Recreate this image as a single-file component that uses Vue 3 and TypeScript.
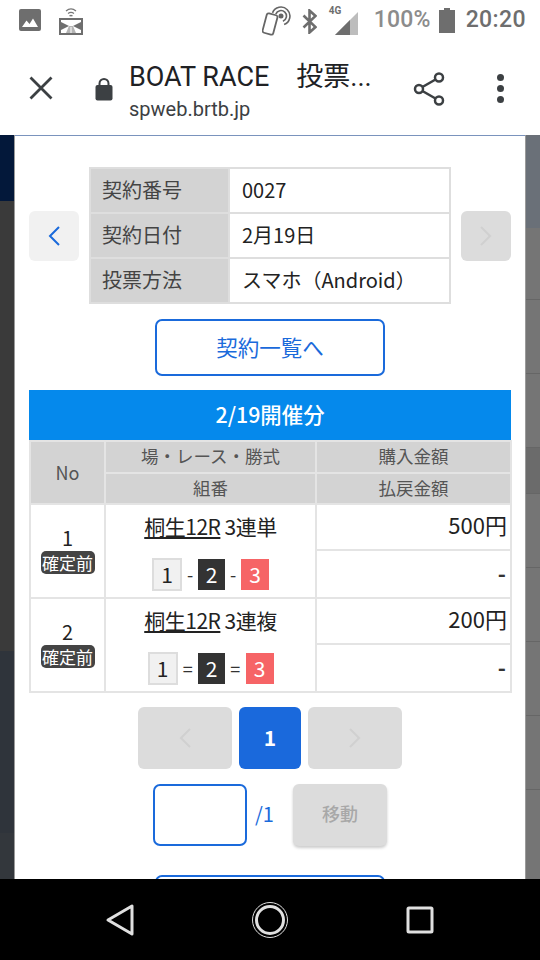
<script setup lang="ts">
interface Row {
  no: number
  race: string
  sep: string
  wide: boolean
  amount: string
}
const rows: Row[] = [
  { no: 1, race: '3連単', sep: '-', wide: false, amount: '500円' },
  { no: 2, race: '3連複', sep: '=', wide: true, amount: '200円' },
]
</script>

<template>
  <div class="screen">
    <div class="status">
      <div class="st-left">
        <svg class="ic-img" width="22" height="22" viewBox="0 0 22 22">
          <rect x="0" y="0" width="22" height="22" rx="2" fill="#6e6e6e" />
          <path d="M3 18l4.500-6.500 3 3.500 3.500-5.500 5 8.500z" fill="#fff" />
        </svg>
        <svg class="ic-cast" width="24" height="28" viewBox="0 0 24 28">
          <path d="M7 4c3-2.500 7-2.500 10 0M9 6.500c2-1.500 4-1.500 6 0M10.500 9c1-.7 2-.7 3 0" stroke="#777" stroke-width="1.300" fill="none" />
          <rect x="1" y="12" width="22" height="15" fill="#fff" stroke="#6e6e6e" stroke-width="2" />
          <path d="M2 15l8 4-8 4zM22 15l-8 4 8 4z" fill="#6e6e6e" />
          <path d="M10 19h4l3 7H7z" fill="#b5b5b5" />
          <path d="M12 20v6" stroke="#fff" stroke-width="1" />
        </svg>
      </div>
      <div class="st-right">
        <svg class="ic-nfc" width="30" height="31" viewBox="0 0 30 31">
          <rect x="2.500" y="8" rx="2" width="11" height="20" transform="rotate(15 8 18)" fill="#fff" stroke="#666" stroke-width="1.800" />
          <circle cx="19" cy="10" r="2.500" fill="#666" />
          <path d="M13.800 8.100A5.500 5.500 0 1 1 20.900 15.200M10.500 6.900A9 9 0 1 1 22.100 18.500" stroke="#666" stroke-width="1.600" fill="none" />
        </svg>
        <svg class="ic-bt" width="15" height="25" viewBox="0 0 15 25">
          <path d="M1.500 6.500l12 11.500-6 5.500V1.500l6 5.500L1.500 18.500" stroke="#6e6e6e" stroke-width="2.600" fill="none" />
        </svg>
        <div class="signal">
          <span class="g4">4G</span>
          <svg width="24" height="24" viewBox="0 0 24 24">
            <path d="M0 24L23 1v23z" fill="#bdbdbd" />
            <path d="M0 24l15-15v15z" fill="#6e6e6e" />
          </svg>
        </div>
        <span class="pct">100%</span>
        <svg class="ic-bat" width="16" height="25" viewBox="0 0 16 25">
          <path d="M5 0h6v2h5v23H0V2h5z" fill="#6e6e6e" />
        </svg>
        <span class="clock">20:20</span>
      </div>
    </div>

    <div class="toolbar">
      <svg class="ic-close" width="24" height="24" viewBox="0 0 24 24">
        <path d="M1.500 1.500l21 21M22.500 1.500l-21 21" stroke="#3c4043" stroke-width="2.800" fill="none" />
      </svg>
      <svg class="ic-lock" width="18" height="24" viewBox="0 0 18 24">
        <path d="M4.500 9V6.500a4.500 4.500 0 0 1 9 0V9" stroke="#3c4043" stroke-width="2" fill="none" />
        <rect x="0.500" y="8" width="17" height="15.500" rx="2" fill="#3c4043" />
      </svg>
      <div class="tb-text">
        <div class="tb-title">BOAT RACE　投票...</div>
        <div class="tb-url">spweb.brtb.jp</div>
      </div>
      <svg class="ic-share" width="32" height="36" viewBox="0 0 32 36">
        <path d="M26 6.500L6 18l20 11.500" stroke="#3c4043" stroke-width="2.500" fill="none" />
        <circle cx="26" cy="6.500" r="4" fill="#fff" stroke="#3c4043" stroke-width="2.500" />
        <circle cx="6" cy="18" r="4" fill="#fff" stroke="#3c4043" stroke-width="2.500" />
        <circle cx="26" cy="29.500" r="4" fill="#fff" stroke="#3c4043" stroke-width="2.500" />
      </svg>
      <div class="dots"><i></i><i></i><i></i></div>
    </div>

    <div class="stage">
      <div class="side side-l">
        <div class="b b1"></div><div class="b b2"></div><div class="b b3"></div><div class="b b4"></div>
      </div>
      <div class="modal">
        <div class="contract">
          <button class="nav-btn on">
            <svg width="14" height="22" viewBox="0 0 14 22"><path d="M12 2L3 11l9 9" stroke="#1a6adb" stroke-width="2" fill="none" /></svg>
          </button>
          <table class="info">
            <tbody>
              <tr><th>契約番号</th><td>0027</td></tr>
              <tr><th>契約日付</th><td>2月19日</td></tr>
              <tr><th>投票方法</th><td>スマホ（Android）</td></tr>
            </tbody>
          </table>
          <button class="nav-btn off">
            <svg width="14" height="22" viewBox="0 0 14 22"><path d="M2 2l9 9-9 9" stroke="#d0d0d0" stroke-width="2" fill="none" /></svg>
          </button>
        </div>
        <div class="list-wrap"><button class="outline">契約一覧へ</button></div>

        <div class="date-head">2/19開催分</div>
        <table class="bets">
          <colgroup><col class="c1" /><col class="c2" /><col class="c3" /></colgroup>
          <thead>
            <tr><th rowspan="2" class="no-h">No</th><th>場・レース・勝式</th><th>購入金額</th></tr>
            <tr><th>組番</th><th>払戻金額</th></tr>
          </thead>
          <tbody v-for="r in rows" :key="r.no">
            <tr class="up">
              <td rowspan="2" class="no-c">
                <div class="no-n">{{ r.no }}</div>
                <span class="tag">確定前</span>
              </td>
              <td rowspan="2" class="mid">
                <div class="race"><u>桐生12R</u> {{ r.race }}</div>
                <div class="combo" :class="{ wide: r.wide }">
                  <span class="n n1">1</span><span class="s">{{ r.sep }}</span><span class="n n2">2</span><span class="s">{{ r.sep }}</span><span class="n n3">3</span>
                </div>
              </td>
              <td class="amt">{{ r.amount }}</td>
            </tr>
            <tr class="lo"><td class="pay">-</td></tr>
          </tbody>
        </table>

        <div class="pager">
          <button class="pg wide-pg">
            <svg width="14" height="22" viewBox="0 0 14 22"><path d="M12 2L3 11l9 9" stroke="#d0d0d0" stroke-width="2" fill="none" /></svg>
          </button>
          <button class="pg cur">1</button>
          <button class="pg wide-pg">
            <svg width="14" height="22" viewBox="0 0 14 22"><path d="M2 2l9 9-9 9" stroke="#d0d0d0" stroke-width="2" fill="none" /></svg>
          </button>
        </div>
        <div class="jump">
          <div class="input"></div>
          <span class="total">/1</span>
          <button class="move">移動</button>
        </div>
        <div class="list-wrap next"><button class="outline"></button></div>
      </div>
      <div class="side side-r">
        <div class="r r0"></div><div class="r r1"></div><div class="r r2"></div><div class="r r3"></div><div class="r r4"></div><div class="r r5"></div><div class="r r6"></div><div class="r r7"></div><div class="r r8"></div><div class="r r9"></div>
      </div>
    </div>

    <div class="navbar">
      <svg width="30" height="34" viewBox="0 0 30 34">
        <path d="M27 3v28L3 17z" stroke="#e0e0e0" stroke-width="3" stroke-linejoin="round" fill="none" />
      </svg>
      <svg width="38" height="38" viewBox="0 0 38 38">
        <circle cx="19" cy="19" r="17.500" stroke="#e0e0e0" stroke-width="1" fill="none" />
        <circle cx="19" cy="19" r="13.500" stroke="#e0e0e0" stroke-width="3" fill="none" />
      </svg>
      <svg width="28" height="28" viewBox="0 0 28 28">
        <rect x="2" y="2" width="24" height="24" rx="1" stroke="#e0e0e0" stroke-width="3" fill="none" />
      </svg>
    </div>
  </div>
</template>

<style scoped>
.screen {
  width: 540px;
  height: 960px;
  display: flex;
  flex-direction: column;
  overflow: hidden;
  font-family: "Noto Sans CJK JP", "Noto Sans", sans-serif;
  background: #fff;
}
button { font-family: inherit; padding: 0; }
.status {
  height: 40px;
  flex: none;
  display: flex;
  justify-content: space-between;
  align-items: center;
  padding: 0 14px 0 19px;
}
.st-left { display: flex; align-items: center; gap: 18px; }
.ic-cast { margin-top: 1px; }
.st-right { display: flex; align-items: center; }
.ic-nfc { margin-right: 10px; margin-top: 2px; }
.ic-bt { margin-right: 12px; margin-top: 3px; }
.signal { position: relative; width: 30px; height: 26px; margin-right: 15px; display: flex; justify-content: flex-end; align-items: flex-end; margin-top: 3px; }
.g4 { position: absolute; left: 0; top: -4px; font: 700 10px/12px Roboto, sans-serif; color: #6e6e6e; }
.pct { font: 500 23px/26px Roboto, sans-serif; color: #8c8c8c; margin-right: 8px; letter-spacing: .2px; }
.ic-bat { margin-right: 11px; }
.clock { font: 500 23px/26px Roboto, sans-serif; color: #6e6e6e; letter-spacing: .4px; }

.toolbar {
  height: 95px;
  flex: none;
  display: flex;
  align-items: center;
  background: #fff;
}
.ic-close { margin-left: 29px; margin-top: 1px; flex: none; }
.ic-lock { margin-left: 42px; margin-top: 2px; flex: none; }
.tb-text { margin-left: 16px; width: 284px; margin-top: 11px; flex: none; }
.tb-title { font: 400 27px/32px Roboto, "Noto Sans CJK JP", sans-serif; color: #202124; white-space: pre; }
.tb-url { font: 400 20px/32px Roboto, sans-serif; color: #3c4043; }
.ic-share { margin-top: 2px; flex: none; }
.dots { margin-left: 52px; display: flex; flex-direction: column; gap: 4px; margin-top: 1px; }
.dots i { width: 7px; height: 7px; border-radius: 50%; background: #3c4043; display: block; }

.stage { flex: 1; display: flex; min-height: 0; background: #747474; }
.side { width: 15px; box-sizing: border-box; flex: none; display: flex; flex-direction: column; }
.side-l { border-right: 1px solid #9a9a9a; }
.side-l .b1 { height: 66px; background: #03183a; }
.side-l .b2 { height: 450px; background: #3a3a3a; }
.side-l .b3 { height: 182px; background: #2f343b; }
.side-l .b4 { flex: 1; background: #33373c; }
.side-r { border-left: 1px solid #9a9a9a; }
.side-r .r { box-sizing: border-box; background: #757575; border-bottom: 1px solid #666; height: 74px; }
.side-r .r0 { height: 93px; background: #6a7078; border-bottom: 0; }
.side-r .r1 { height: 72px; }
.side-r .r4 { height: 46px; background: #6b6b6b; }
.side-r .r9 { flex: 1; height: auto; border-bottom: 0; }
.modal {
  flex: 1;
  min-width: 0;
  background: #fff;
  border-top: 1px solid #7a93bd;
  padding: 31px 14px 0;
  overflow: hidden;
}
.contract { display: flex; align-items: center; justify-content: space-between; }
.nav-btn {
  width: 50px; height: 50px; border: 0; border-radius: 6px;
  display: flex; align-items: center; justify-content: center;
}
.nav-btn.on { background: #f1f1f1; }
.nav-btn.off { background: #dcdcdc; }
.info { width: 362px; border-collapse: collapse; font-size: 20px; }
.info th, .info td { height: 41px; padding: 0 0 2px; border: 2px solid #dedede; line-height: 26px; font-weight: 400; text-align: left; }
.info th { width: 139px; padding-left: 11px; background: #d3d3d3; color: #444; box-sizing: border-box; height: 43px; }
.info td { padding-left: 12px; color: #222; }
.list-wrap { display: flex; justify-content: center; margin-top: 15px; }
.outline {
  width: 230px; height: 57px; box-sizing: border-box; flex: none;
  border: 2px solid #1a6adb; border-radius: 7px; background: #fff;
  color: #1a6adb; font-size: 21.500px; padding-bottom: 3px;
}
.date-head {
  margin-top: 14px;
  height: 50px; background: #0589ec; color: #fff;
  font-size: 21.400px; font-weight: 500; line-height: 47px; text-align: center;
}
.bets { width: 481px; border-collapse: collapse; table-layout: fixed; }
.c1 { width: 75px; } .c2 { width: 211px; } .c3 { width: 195px; }
.bets th, .bets td { border: 2px solid #e4e4e4; padding: 0; font-weight: 400; text-align: center; }
.bets th { background: #d3d3d3; color: #555; font-size: 17.500px; height: 28.500px; padding-bottom: 1px; line-height: 24px; }
.bets th.no-h { font-size: 18px; }
.no-c { color: #222; font-size: 20px; padding-bottom: 3px !important; }
.no-n { line-height: 26px; }
.tag { display: block; margin: 0 auto; background: #444; color: #fff; font-size: 17px; line-height: 23px; border-radius: 5px; width: 54px; white-space: nowrap; }
.race { font-size: 21px; letter-spacing: -.5px; color: #222; line-height: 28px; margin-bottom: 18px; }
.combo { display: flex; justify-content: center; align-items: center; color: #333; font-size: 18px; height: 33px; }
.n { width: 27px; height: 31px; display: flex; align-items: center; justify-content: center; box-sizing: border-box; font-size: 21px; }
.n1 { background: #f1f1f1; border: 2px solid #ddd; width: 30px; height: 33px; color: #222; }
.n2 { background: #333; color: #fff; }
.n3 { background: #f66466; color: #fff; width: 28px; }
.s { width: 16px; text-align: center; }
.combo.wide .s { width: 20.500px; }
.bets .up .amt { height: 38px; text-align: right; padding: 0 3px 6px 0; font-size: 22px; color: #222; line-height: 30px; }
.bets .lo .pay { height: 41px; text-align: right; padding: 0 4px 5px 0; font-size: 22px; font-weight: 700; color: #333; line-height: 30px; }
.pager { display: flex; justify-content: center; gap: 7px; margin-top: 14px; }
.pg { height: 62px; border: 0; border-radius: 6px; display: flex; align-items: center; justify-content: center; }
.wide-pg { width: 94px; background: #dcdcdc; }
.cur { width: 62px; background: #1a69dc; color: #fff; font-size: 21px; font-weight: 700; padding-bottom: 2px; }
.jump { display: flex; justify-content: center; align-items: center; margin-top: 15px; }
.input { width: 94px; height: 62px; box-sizing: border-box; border: 2px solid #1a6adb; border-radius: 7px; background: #fff; }
.total { width: 46px; box-sizing: border-box; padding: 0 0 4px 2px; color: #1a6adb; font-size: 20px; text-indent: 6px; }
.move {
  width: 94px; height: 62px; border: 0; border-radius: 6px; background: #dcdcdc;
  color: #a8a8a8; font-size: 18px; font-weight: 500; padding-bottom: 4px;
  box-shadow: 0 2px 3px rgba(0,0,0,.2);
}
.next { margin-top: 29px; }

.navbar {
  height: 81px;
  flex: none;
  background: #000;
  display: grid;
  grid-template-columns: repeat(3, 150px);
  justify-content: center;
  justify-items: center;
  align-items: center;
}
</style>
